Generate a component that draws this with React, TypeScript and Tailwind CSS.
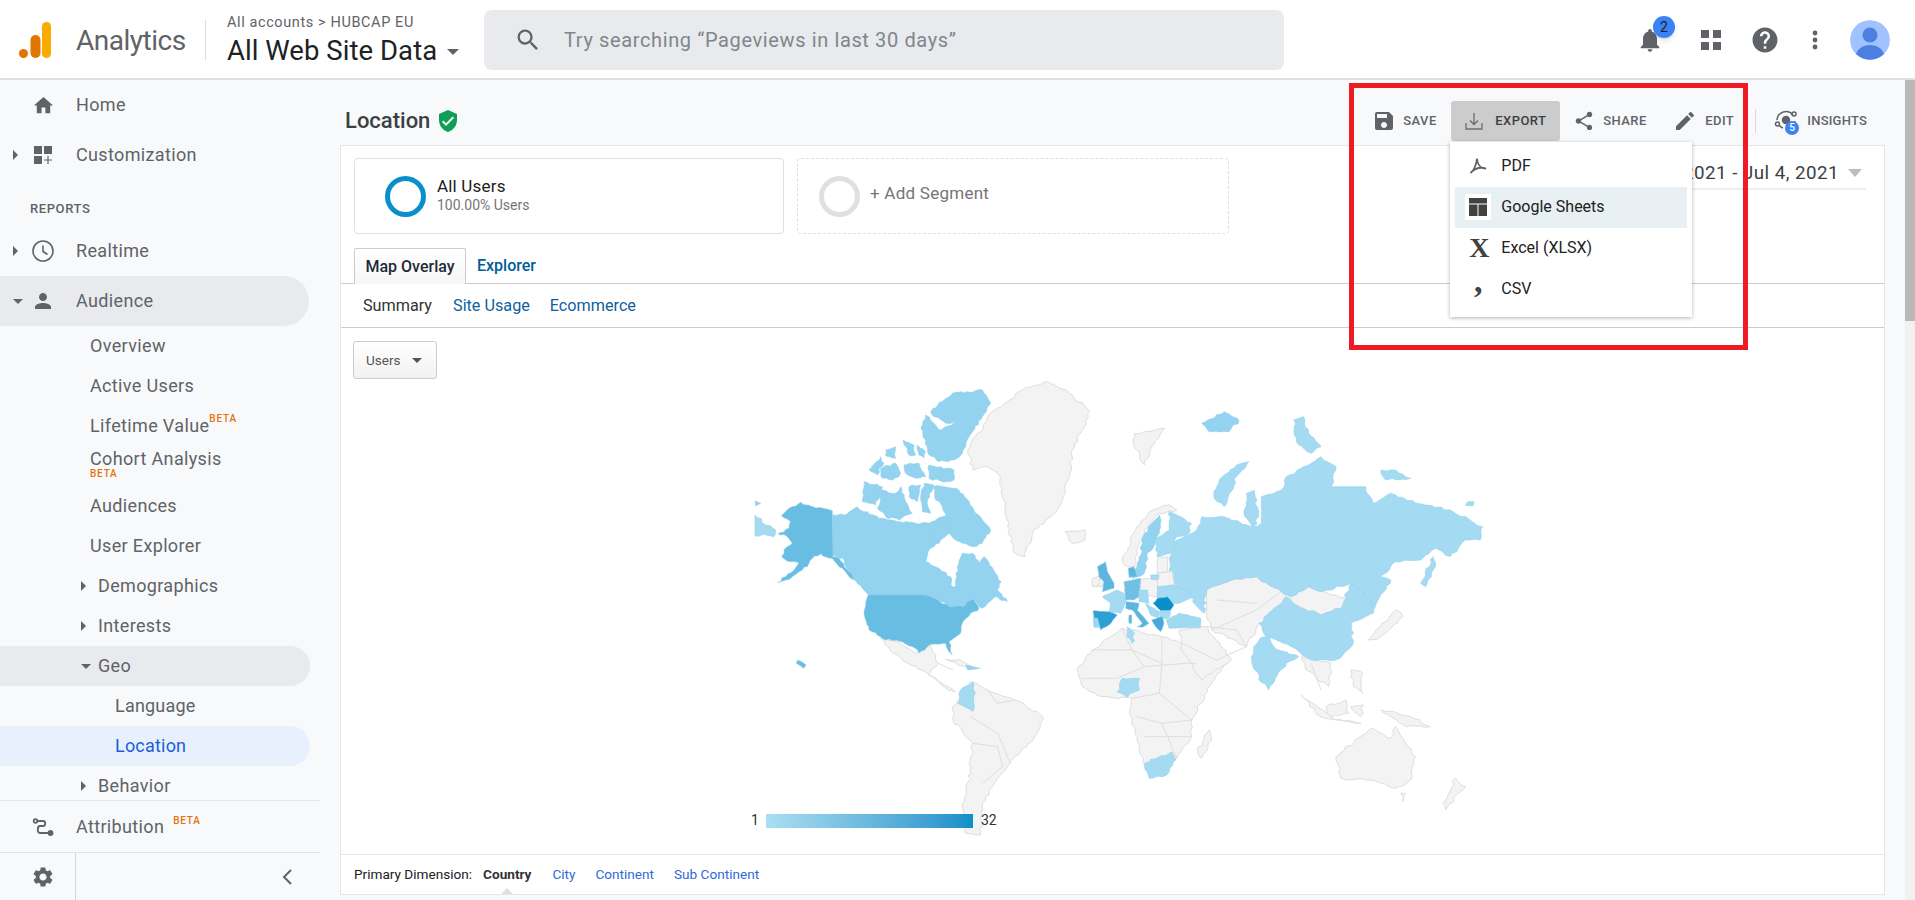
import type { ReactNode } from "react"

type Land = [string, string]

const GREY = "#f3f3f3"
const RU = "#a4dbf2"
const CA = "#93d3ef"
const US = "#68bde2"

// shapes traced off three different crops, so each list has its own transform
const worldGrey: string[] = [
  "460,240 505,130 570,60 620,35 665,70 705,125 690,180 670,240 665,320 640,420 590,490 575,560 555,550 540,470 525,320 500,290 470,300",
  "655,485 695,480 695,510 670,520",
  "795,190 855,175 830,230 815,285 795,230",
  "285,805 320,815 355,850 385,825 400,880 380,915 420,950 435,965 420,960 390,920 345,885 310,850",
  "415,868 445,870 470,890 440,885",
  "430,1010 465,935 500,960 555,990 610,1040 600,1090 545,1180 520,1225 490,1300 485,1395 455,1390 450,1320 465,1200 470,1120 430,1050",
  "680,900 710,840 770,775 850,800 890,820 920,880 985,870 950,940 910,1050 910,1100 880,1165 825,1225 800,1110 785,1030 790,985 730,980 690,950",
  "945,1080 950,1110 930,1165 922,1140",
  "770,570 800,470 825,425 865,405 880,420 845,430 815,480 800,540 795,590 780,590",
  "940,660 990,630 1040,620 1090,665 1100,680 1045,760 1020,830 950,780 940,740",
  "885,780 940,770 990,870 930,930 890,840",
  "1105,680 1145,650 1175,665 1225,690 1210,715 1170,735 1120,705",
  "1130,860 1190,880 1185,950 1160,920 1140,900",
  "1265,810 1320,720 1335,740 1290,800",
  "1230,900 1250,905 1255,970 1235,950",
  "1130,975 1200,1050 1250,1060 1170,1040",
  "1180,1010 1220,990 1225,1030 1190,1040",
  "1230,1010 1255,1005 1250,1040",
  "1290,1020 1350,1040 1390,1070 1340,1070",
  "1200,1160 1270,1075 1310,1105 1320,1070 1360,1160 1350,1230 1320,1255 1270,1230 1210,1225",
  "1330,1270 1340,1270 1335,1295",
  "1440,1225 1460,1250 1420,1320 1415,1300",
  "715,625 740,615 730,650 712,650",
]

const worldBorders: string[] = [
  "770,775 790,840 850,880 850,800",
  "710,840 790,840 815,890 760,925 690,925",
  "815,890 900,880 920,880",
  "850,880 845,970 790,985",
  "845,970 910,1050 850,1060 800,1040",
  "850,1060 880,1165",
  "815,1100 910,1100",
  "465,1040 520,1090 545,1180",
  "470,1120 520,1130 530,1190 490,1240",
  "500,960 520,1000 555,990",
  "1000,780 1020,830 960,870",
  "950,780 1040,720 1090,665",
  "1150,880 1170,960",
  "400,880 430,900",
  "960,690 1040,700",
  "940,770 1000,780",
  "890,820 960,870",
]

const worldBlue: Land[] = [
  ["780,770 795,790 790,820 780,800", RU],
  ["770,925 805,925 805,960 780,982 760,965", RU],
  ["440,1000 445,960 470,935 475,970 470,1025", RU],
  ["815,1180 870,1145 878,1170 860,1215 825,1225", RU],
  ["930,160 975,125 1005,150 985,185 945,185", CA],
  ["1115,150 1135,140 1145,190 1170,230 1150,250 1120,215", RU],
  ["1290,300 1320,300 1350,325 1300,330", RU],
  ["1000,285 1025,275 1000,320 975,410 955,385 965,330", RU],
  ["1020,370 1035,360 1045,440 1030,480 1015,430", RU],
  ["1370,640 1395,560 1400,590 1380,650", RU],
  ["1465,395 1478,395 1475,408 1460,406", RU],
  ["865,570 880,510 920,480 930,440 975,440 1030,470 1050,460 1050,380 1090,360 1100,320 1170,260 1200,290 1190,350 1260,350 1275,400 1310,370 1380,405 1430,420 1495,470 1490,510 1460,510 1430,560 1400,535 1370,570 1320,575 1290,620 1310,630 1285,690 1270,730 1230,640 1170,665 1145,650 1110,680 1090,665 1040,620 990,630 940,660 935,730 905,680 870,640", RU],
  ["1045,760 1100,680 1120,705 1170,735 1210,715 1230,640 1270,690 1275,730 1230,760 1235,820 1200,870 1150,870 1110,830 1060,800", RU],
  ["1035,830 1060,790 1075,830 1125,860 1100,880 1065,960 1045,930 1030,860", RU],
  ["800,590 815,490 845,435 845,490 820,560 815,610 790,625", CA],
  ["865,425 910,460 905,490 880,500 870,550 840,560 835,510 865,480", RU],
  ["455,885 485,895 460,900", CA],
  ["118,870 135,885 130,895 115,880", US],
]

const northAmerica: Land[] = [
  ["18,405 50,435 80,450 75,470 50,465 18,468", RU],
  ["18,362 35,370 20,378", CA],
  ["252,405 285,405 325,380 345,395 400,415 445,425 500,430 540,430 575,465 570,490 540,510 530,545 570,565 605,590 610,620 620,620 625,560 640,520 670,520 690,550 705,530 740,580 757,605 745,630 775,665 740,650 700,685 690,680 675,660 640,680 605,705 590,670 555,655 530,645 358,645 340,625 310,590 280,535 252,525", CA],
  ["540,430 600,400 620,395 655,430 640,445 615,440 600,460 575,480 570,490 545,460", CA],
  ["555,320 585,320 630,330 670,380 700,420 725,450 700,490 670,500 640,490 600,460 615,440 640,445 655,430 620,395 600,400 590,440 575,430 590,410 580,380 560,360", CA],
  ["345,305 400,320 380,375 340,365", CA],
  ["385,330 440,340 455,320 470,365 490,400 450,420 410,410 385,385 395,360", CA],
  ["480,320 515,315 505,365 480,350", CA],
  ["525,310 555,315 535,360 545,400 520,395 515,360", CA],
  ["545,95 610,40 700,30 725,70 700,110 660,170 640,220 615,240 570,245 540,225 530,180 515,145 530,105 555,130 570,150 625,125 590,130 555,110", CA],
  ["540,255 565,262 615,270 615,300 580,305 540,295", CA],
  ["360,270 395,230 405,250 390,265 385,285", CA],
  ["395,265 440,250 455,280 430,300 400,295", CA],
  ["465,255 510,250 530,290 500,295 470,280", CA],
  ["462,180 495,195 500,225 480,225", CA],
  ["505,195 530,215 525,235 510,225", CA],
  ["410,210 440,200 440,235 410,228", CA],
  ["155,367 185,378 250,392 252,530 270,535 300,575 315,600 300,590 280,565 250,535 215,522 190,535 180,550 160,570 130,590 110,600 85,608 110,590 135,570 150,548 125,545 98,530 105,510 130,490 115,470 88,462 120,445 125,425 97,408 120,385", US],
  ["358,645 530,645 555,655 600,680 640,680 672,658 690,685 665,700 640,730 635,760 600,785 610,825 600,815 590,790 540,795 510,820 490,800 460,785 400,775 360,750 347,710 350,670", US],
]

const europeGrey: string[] = [
  "40,115 62,108 60,135 40,140",
  "185,118 235,115 235,170 200,165 185,155",
  "235,100 280,95 285,135 235,140",
  "235,55 265,50 265,95 235,100",
]

const europeBlue: Land[] = [
  ["55,80 80,65 85,95 105,130 105,145 70,155 75,125 60,110", "#5db6df"],
  ["70,170 115,150 135,160 140,185 125,220 90,215 95,190", RU],
  ["42,212 90,215 115,225 90,255 65,270 55,235 45,235", "#2e9fd4"],
  ["42,235 55,235 62,262 45,262", "#9ad7f0"],
  ["135,125 185,115 180,170 165,180 140,180", "#6fc0e4"],
  ["148,85 165,80 175,110 150,112", "#5db6df"],
  ["180,150 205,150 210,190 180,185", RU],
  ["140,185 180,190 175,210 210,250 190,262 175,260 190,250 160,210 140,205", "#5cb5de"],
  ["150,225 158,225 158,250 150,250", "#5cb5de"],
  ["235,140 280,135 330,155 335,175 300,190 280,190 265,170 235,175", RU],
  ["200,190 240,215 240,235 215,225", RU],
  ["240,215 275,210 270,235 245,235", RU],
  ["218,240 250,230 255,250 245,275 230,260", "#47a9d9"],
  ["262,240 300,220 365,235 365,262 270,265", "#a0daf1"],
  ["215,105 240,105 238,118 217,118", RU],
  ["235,175 265,170 285,195 275,210 245,212 222,190", "#0a8ec8"],
]

// rough up the long traced edges so they read as coastline; the offset depends only
// on the position, so two countries sharing an edge still meet. Long straight borders stay straight.
const wobble = (x: number, y: number, seed: number) => {
  const v = Math.sin(x * 12.9898 + y * 78.233 + seed) * 43758.5453
  return v - Math.floor(v) - 0.5
}

const roughen = (points: string, amp: number) => {
  const pts = points.split(" ").map((p) => p.split(",").map(Number))
  const out: string[] = []
  pts.forEach((a, i) => {
    const b = pts[(i + 1) % pts.length]
    const dx = b[0] - a[0]
    const dy = b[1] - a[1]
    const len = Math.hypot(dx, dy)
    out.push(a.join(","))
    if (len > 60 && (Math.abs(dx) < 4 || Math.abs(dy) < 4)) return
    const n = Math.floor(len / 9)
    for (let k = 1; k < n; k++) {
      const x = Math.round(a[0] + (dx * k) / n)
      const y = Math.round(a[1] + (dy * k) / n)
      out.push(`${x + wobble(x, y, 1) * amp},${y + wobble(x, y, 2) * amp}`)
    }
  })
  return out.join(" ")
}

const Shape = ({ points, fill, amp = 7 }: { points: string; fill: string; amp?: number }) => (
  <polygon
    points={roughen(points, amp)}
    fill={fill}
    stroke={fill === GREY ? "#dedede" : "#8ccde9"}
    strokeWidth={fill === GREY ? 1 : 0.5}
    strokeLinejoin="round"
    vectorEffect="non-scaling-stroke"
  />
)

const WorldMap = () => (
  <svg viewBox="0 0 780 484" className="w-[780px] h-[484px] block">
    <g transform="scale(0.4975 0.3333)">
      {worldGrey.map((p, i) => <Shape key={i} points={p} fill={GREY} />)}
      {worldBorders.map((p, i) => (
        <polyline key={i} points={p} fill="none" stroke="#dedede" strokeWidth={1} vectorEffect="non-scaling-stroke" />
      ))}
      {worldBlue.map(([p, c], i) => <Shape key={i} points={p} fill={c} />)}
    </g>
    <g transform="translate(10 10) scale(0.3333)">
      {northAmerica.map(([p, c], i) => <Shape key={i} points={p} fill={c} />)}
    </g>
    <g transform="translate(340 170) scale(0.3333)">
      {europeGrey.map((p, i) => <Shape key={i} points={p} fill={GREY} amp={2} />)}
      {europeBlue.map(([p, c], i) => <Shape key={i} points={p} fill={c} amp={2} />)}
    </g>
  </svg>
)

const Icon = ({ d, className }: { d: string; className: string }) => (
  <svg viewBox="0 0 24 24" fill="currentColor" className={className}>
    <path d={d} />
  </svg>
)

const Caret = ({ open }: { open?: boolean }) =>
  open ? (
    <span className="w-0 h-0 border-x-[5px] border-x-transparent border-t-[5px] border-t-[#5f6368]" />
  ) : (
    <span className="w-0 h-0 border-y-[5px] border-y-transparent border-l-[5px] border-l-[#5f6368]" />
  )

const Beta = ({ className }: { className: string }) => (
  <span className={"text-[10px] leading-none font-medium tracking-[0.8px] text-[#e8710a] " + className}>BETA</span>
)

const NavRow = ({ label, icon, caret, open, className }: { label: string; icon: ReactNode; caret?: boolean; open?: boolean; className?: string }) => (
  <div className={"h-[50px] flex items-center shrink-0 " + (className ?? "")}>
    <div className="w-[33px] pl-[13px] flex items-center">{caret && <Caret open={open} />}</div>
    <div className="w-[43px] flex items-center">{icon}</div>
    <span className="text-[18px] -mt-[1px] tracking-[0.35px]">{label}</span>
  </div>
)

const SubRow = ({ label, children }: { label: string; children?: ReactNode }) => (
  <div className="h-10 pl-[90px] flex items-center shrink-0">
    <span className="text-[18px] -mt-[2px] tracking-[0.35px]">{label}</span>
    {children}
  </div>
)

const CaretRow = ({ label, open, className }: { label: string; open?: boolean; className?: string }) => (
  <div className={"h-10 pl-[81px] flex items-center shrink-0 " + (className ?? "")}>
    <div className="w-[17px] flex items-center"><Caret open={open} /></div>
    <span className="text-[18px] -mt-[2px] tracking-[0.35px]">{label}</span>
  </div>
)

const Sidebar = () => (
  <aside className="w-[320px] mr-[20px] h-[820px] flex flex-col text-[#5f6368] shrink-0">
    <div className="h-[720px] overflow-hidden flex flex-col">
      <NavRow label="Home" icon={<Icon className="w-[23px] h-[23px] -ml-[1px]" d="M10 20v-6h4v6h5v-8h3L12 3 2 12h3v8z" />} />
      <NavRow
        label="Customization"
        caret
        icon={
          <svg viewBox="0 0 20 20" fill="currentColor" className="w-5 h-5">
            <rect x="1" y="1" width="8" height="8" />
            <rect x="11" y="1" width="8" height="8" />
            <rect x="1" y="11" width="8" height="8" />
            <path d="M14.4 11h1.2v3.4H19v1.2h-3.4V19h-1.2v-3.4H11v-1.2h3.4z" />
          </svg>
        }
      />
      <div className="h-[46px] pl-[30px] pt-[11px] flex items-center shrink-0 text-[13px] font-medium tracking-[0.6px]">REPORTS</div>
      <NavRow
        label="Realtime"
        caret
        icon={
          <svg viewBox="0 0 24 24" fill="none" stroke="currentColor" strokeWidth="1.6" className="w-6 h-6 -ml-[2px]">
            <circle cx="12" cy="12" r="10" />
            <path d="M12 6.5V12.5l4.5 3" />
          </svg>
        }
      />
      <NavRow
        label="Audience"
        caret
        open
        className="w-[309px] rounded-r-full bg-[#e8eaed]"
        icon={<Icon className="w-[24px] h-[24px] -ml-[2px]" d="M12 12c2.21 0 4-1.79 4-4s-1.79-4-4-4-4 1.79-4 4 1.79 4 4 4zm0 2c-2.67 0-8 1.34-8 4v2h16v-2c0-2.66-5.33-4-8-4z" />}
      />
      <SubRow label="Overview" />
      <SubRow label="Active Users" />
      <SubRow label="Lifetime Value"><Beta className="-mt-[14px]" /></SubRow>
      <div className="h-10 pl-[90px] shrink-0 flex flex-col pt-[3px]">
        <span className="text-[18px] leading-5 tracking-[0.35px]">Cohort Analysis</span>
        <Beta className="" />
      </div>
      <SubRow label="Audiences" />
      <SubRow label="User Explorer" />
      <CaretRow label="Demographics" />
      <CaretRow label="Interests" />
      <CaretRow label="Geo" open className="w-[310px] rounded-r-full bg-[#e8eaed]" />
      <div className="h-10 pl-[115px] pb-[2px] flex items-center shrink-0 text-[18px] tracking-[0.2px]">Language</div>
      <div className="h-10 w-[310px] pl-[115px] pb-[2px] flex items-center shrink-0 text-[18px] tracking-[0.2px] rounded-r-full bg-[#e8f0fe] text-[#1a5fd8]">Location</div>
      <CaretRow label="Behavior" />
    </div>
    <div className="h-[52px] flex items-center border-t border-[#e4e5e7] shrink-0">
      <div className="w-[32px]" />
      <div className="w-[44px]">
        <svg viewBox="0 0 22 18" fill="none" stroke="currentColor" strokeWidth="1.8" className="w-[22px] h-[18px]">
          <circle cx="3.5" cy="3" r="1.8" />
          <circle cx="18.5" cy="15" r="2" fill="currentColor" />
          <path d="M5 3h6c3 0 3 5 0 5H8c-3 0-3 7 0 7h9" />
        </svg>
      </div>
      <span className="text-[18px] -mt-[1px] tracking-[0.35px]">Attribution</span>
      <Beta className="ml-[9px] -mt-[12px]" />
    </div>
    <div className="h-[48px] flex items-center border-t border-[#e0e1e3] shrink-0">
      <div className="w-[76px] h-full flex items-center justify-start pl-[31px] border-r border-[#d5d6d8]">
        <Icon className="w-6 h-6" d="M19.14 12.94c.04-.3.06-.61.06-.94 0-.32-.02-.64-.07-.94l2.03-1.58a.49.49 0 0 0 .12-.61l-1.92-3.32a.488.488 0 0 0-.59-.22l-2.39.96c-.5-.38-1.03-.7-1.62-.94l-.36-2.54a.484.484 0 0 0-.48-.41h-3.84c-.24 0-.43.17-.47.41l-.36 2.54c-.59.24-1.13.57-1.62.94l-2.39-.96c-.22-.08-.47 0-.59.22L2.74 8.87c-.12.21-.08.47.12.61l2.03 1.58c-.05.3-.09.63-.09.94s.02.64.07.94l-2.03 1.58a.49.49 0 0 0-.12.61l1.92 3.32c.12.22.37.29.59.22l2.39-.96c.5.38 1.03.7 1.62.94l.36 2.54c.05.24.24.41.48.41h3.84c.24 0 .44-.17.47-.41l.36-2.54c.59-.24 1.13-.56 1.62-.94l2.39.96c.22.08.47 0 .59-.22l1.92-3.32c.12-.22.07-.47-.12-.61l-2.01-1.58zM12 15.6c-1.98 0-3.6-1.62-3.6-3.6s1.62-3.6 3.6-3.6 3.6 1.62 3.6 3.6-1.62 3.6-3.6 3.6z" />
      </div>
      <svg viewBox="0 0 12 18" fill="none" stroke="currentColor" strokeWidth="2" className="w-3 h-[18px] ml-[205px]">
        <path d="M10 2L3 9l7 7" />
      </svg>
    </div>
  </aside>
)

const Header = () => (
  <header className="h-20 pt-[2px] flex items-center bg-white border-b-2 border-[#e0e0e0] shrink-0">
    <svg viewBox="0 0 32 36" className="w-8 h-9 ml-[19px]">
      <circle cx="4.5" cy="31.5" r="4.5" fill="#e37400" />
      <rect x="11.5" y="13" width="10" height="23" rx="5" fill="#e37400" />
      <rect x="23" y="0" width="9" height="36" rx="4.5" fill="#f9ab00" />
    </svg>
    <span className="ml-[25px] mt-[1px] w-[110px] text-[28px] tracking-[-0.5px] text-[#5f6368] whitespace-nowrap">Analytics</span>
    <div className="ml-[19px] h-10 border-l border-[#dadce0]" />
    <div className="ml-[21px] w-[257px] flex flex-col">
      <div className="text-[14.5px] leading-[18px] text-[#5f6368] tracking-[0.6px]">All accounts &gt; HUBCAP EU</div>
      <div className="flex items-center mt-[3px]">
        <span className="text-[27.5px] leading-8 text-[#202124] tracking-[0.05px]">All Web Site Data</span>
        <span className="ml-[10px] mt-[2px] w-0 h-0 border-x-[6px] border-x-transparent border-t-[6px] border-t-[#5f6368]" />
      </div>
    </div>
    <div className="w-[800px] h-[60px] rounded-lg bg-[#e8eaed] flex items-center pl-[30px]">
      <Icon className="w-7 h-7 text-[#5f6368]" d="M15.5 14h-.79l-.28-.27A6.471 6.471 0 0 0 16 9.5 6.5 6.5 0 1 0 9.5 16c1.61 0 3.09-.59 4.23-1.57l.27.28v.79l5 4.99L20.49 19l-4.99-5zm-6 0C7.01 14 5 11.99 5 9.5S7.01 5 9.5 5 14 7.01 14 9.5 11.99 14 9.5 14z" />
      <span className="ml-[22px] text-[20px] tracking-[0.62px] text-[#80868b]">Try searching “Pageviews in last 30 days”</span>
    </div>
    <div className="ml-auto flex items-center text-[#5f6368]">
      <div className="relative w-7 h-7">
        <Icon className="w-7 h-7" d="M12 22c1.1 0 2-.9 2-2h-4c0 1.1.89 2 2 2zm6-6v-5c0-3.07-1.64-5.64-4.5-6.32V4c0-.83-.67-1.5-1.5-1.5s-1.5.67-1.5 1.5v.68C7.63 5.36 6 7.92 6 11v5l-2 2v1h16v-1l-2-2z" />
        <span className="absolute -top-[10px] left-[17px] w-[22px] h-[22px] rounded-full bg-[#3b82f6] shadow-md text-[#202124] text-[14px] flex items-center justify-center">2</span>
      </div>
      <svg viewBox="0 0 20 20" fill="currentColor" className="w-5 h-5 ml-[37px]">
        <rect x="0" y="0" width="8" height="8" />
        <rect x="12" y="0" width="8" height="8" />
        <rect x="0" y="12" width="8" height="8" />
        <rect x="12" y="12" width="8" height="8" />
      </svg>
      <Icon className="w-[30px] h-[30px] ml-[29px]" d="M12 2C6.48 2 2 6.48 2 12s4.48 10 10 10 10-4.48 10-10S17.52 2 12 2zm1 17h-2v-2h2v2zm2.07-7.75l-.9.92C13.45 12.9 13 13.5 13 15h-2v-.5c0-1.1.45-2.1 1.17-2.83l1.24-1.26c.37-.36.59-.86.59-1.41 0-1.1-.9-2-2-2s-2 .9-2 2H8c0-2.21 1.79-4 4-4s4 1.79 4 4c0 .88-.36 1.68-.93 2.25z" />
      <svg viewBox="0 0 6 20" fill="currentColor" className="w-[6px] h-5 ml-[32px]">
        <circle cx="3" cy="3" r="2.4" />
        <circle cx="3" cy="10" r="2.4" />
        <circle cx="3" cy="17" r="2.4" />
      </svg>
      <svg viewBox="0 0 40 40" className="w-10 h-10 ml-[32px] mr-[25px] rounded-full">
        <circle cx="20" cy="20" r="20" fill="#a0c3ff" />
        <circle cx="20" cy="15" r="7.5" fill="#4c7fe0" />
        <path d="M6 34c2-6 8-9 14-9s12 3 14 9a20 20 0 0 1-28 0z" fill="#4c7fe0" />
      </svg>
    </div>
  </header>
)

const ExportMenu = () => (
  <div className="absolute top-[41px] -left-[1px] w-[242px] h-[175px] bg-white shadow-[0_1px_4px_rgba(0,0,0,0.3)] z-10 pt-[5px] px-[5px] text-[16px] tracking-normal font-normal text-[#212121]">
    <div className="h-[41px] -mt-[1px] flex items-center pl-[14px]">
      <svg viewBox="0 0 18 18" fill="none" stroke="#5f6368" strokeWidth="1.8" className="w-[18px] h-[18px]">
        <path d="M1.5 16c3-2 5.5-7 6.5-14.5M8 2c.5 5 3.5 9.5 9 9.5-5-1.5-11-.5-15.5 4.5" />
      </svg>
      <span className="ml-[14px]">PDF</span>
    </div>
    <div className="h-[41px] flex items-center bg-[#e8f0f3] pl-[10px]">
      <div className="w-[26px] h-[26px] bg-white flex items-center justify-center">
        <svg viewBox="0 0 18 18" fill="#424242" className="w-[18px] h-[18px]">
          <rect x="0" y="0" width="18" height="5.5" />
          <rect x="0" y="6.5" width="8.5" height="11.5" />
          <rect x="9.5" y="6.5" width="8.5" height="11.5" />
        </svg>
      </div>
      <span className="ml-[10px]">Google Sheets</span>
    </div>
    <div className="h-[41px] flex items-center pl-[14px]">
      <span className="w-[18px] text-center font-['Liberation_Serif',serif] font-bold text-[28px] leading-none text-[#424242]">X</span>
      <span className="ml-[14px]">Excel (XLSX)</span>
    </div>
    <div className="h-[41px] flex items-center pl-[14px]">
      <span className="w-[18px] text-center font-['Liberation_Serif',serif] font-bold text-[34px] leading-none -mt-[16px] text-[#424242]">,</span>
      <span className="ml-[14px]">CSV</span>
    </div>
  </div>
)

const Toolbar = () => (
  <div className="h-[65px] pt-[16px] flex items-center shrink-0">
    <div className="ml-[5px] text-[22px] font-medium text-[#3c4043]">Location</div>
    <Icon className="w-[24px] h-[24px] ml-[6px] text-[#0f9d58]" d="M12 1L3 5v6c0 5.55 3.84 10.74 9 12 5.16-1.26 9-6.45 9-12V5l-9-4zm-2 16l-4-4 1.41-1.41L10 14.17l6.59-6.59L18 9l-8 8z" />
    <div className="ml-auto mr-[38px] h-10 flex items-center text-[13px] font-medium text-[#5f6368] tracking-[0.4px]">
      <div className="w-[89px] h-10 flex items-center pl-[10px]">
        <Icon className="w-6 h-6" d="M17 3H5c-1.11 0-2 .9-2 2v14c0 1.1.89 2 2 2h14c1.1 0 2-.9 2-2V7l-4-4zm-5 16c-1.66 0-3-1.34-3-3s1.34-3 3-3 3 1.34 3 3-1.34 3-3 3zm3-10H5V5h10v4z" />
        <span className="ml-[7px]">SAVE</span>
      </div>
      <div className="relative w-[109px] h-10 flex items-center pl-[13px] bg-[#cccccc] rounded-[3px] text-[#3c4043]">
        <svg viewBox="0 0 20 20" fill="none" stroke="#6b6e72" strokeWidth="1.3" className="w-5 h-5">
          <path d="M10 2v11M6 9.5l4 4 4-4M2 12v6h16v-6" />
        </svg>
        <span className="ml-[11px]">EXPORT</span>
        <ExportMenu />
      </div>
      <div className="w-[104px] h-10 flex items-center pl-[13px]">
        <Icon className="w-[22px] h-[22px]" d="M18 16.08c-.76 0-1.44.3-1.96.77L8.91 12.7c.05-.23.09-.46.09-.7s-.04-.47-.09-.7l7.05-4.11c.54.5 1.25.81 2.04.81 1.66 0 3-1.34 3-3s-1.34-3-3-3-3 1.34-3 3c0 .24.04.47.09.7L8.04 9.81C7.5 9.31 6.79 9 6 9c-1.66 0-3 1.34-3 3s1.34 3 3 3c.79 0 1.5-.31 2.04-.81l7.12 4.16c-.05.21-.08.43-.08.65 0 1.61 1.31 2.92 2.92 2.92 1.61 0 2.92-1.31 2.92-2.92s-1.31-2.92-2.92-2.92z" />
        <span className="ml-[8px]">SHARE</span>
      </div>
      <div className="w-[80px] h-10 flex items-center pl-[9px]">
        <Icon className="w-6 h-6" d="M3 17.25V21h3.75L17.81 9.94l-3.75-3.75L3 17.25zM20.71 7.04c.39-.39.39-1.02 0-1.41l-2.34-2.34c-.39-.39-1.02-.39-1.41 0l-1.83 1.83 3.75 3.75 1.83-1.83z" />
        <span className="ml-[8px]">EDIT</span>
      </div>
      <div className="h-6 ml-[11px] border-l border-[#d9d9d9]" />
      <svg viewBox="0 0 26 26" className="w-[26px] h-[26px] ml-[18px]" fill="none" stroke="#5f6368" strokeWidth="1.5">
        <path d="M3 12a9 9 0 0 1 16-5M21 13a9 9 0 0 1-2 5M5 17a9 9 0 0 0 4 3" />
        <circle cx="12" cy="12" r="3.5" fill="#5f6368" />
        <circle cx="20" cy="6" r="2" />
        <circle cx="3.5" cy="16" r="2" />
      </svg>
      <span className="-ml-[15px] mt-[14px] w-[14px] h-[14px] rounded-full bg-[#3b82f6] text-white text-[10px] flex items-center justify-center relative">5</span>
      <span className="ml-[8px] tracking-[0.2px]">INSIGHTS</span>
    </div>
  </div>
)

const Segment = ({ dashed, children }: { dashed?: boolean; children: ReactNode }) => (
  <div className={"h-[76px] rounded-[4px] flex items-center " + (dashed ? "w-[432px] border border-dashed border-[#e0e0e0] pl-[21px]" : "w-[430px] border border-[#e0e0e0] pl-[30px]")}>
    {children}
  </div>
)

const Panel = () => (
  <div className="mr-[20px] bg-white border-x border-t border-b border-[#e6e6e6] h-[750px] flex flex-col relative">
    <div className="h-[102px] pt-[12px] pl-[13px] flex shrink-0">
      <Segment>
        <div className="w-[41px] h-[41px] rounded-full border-[5px] border-[#0a8fcb]" />
        <div className="ml-[11px] -mt-[4px] flex flex-col">
          <span className="text-[17px] leading-5 text-[#212121] tracking-[0.2px]">All Users</span>
          <span className="text-[14px] leading-4 mt-[1px] text-[#757575]">100.00% Users</span>
        </div>
      </Segment>
      <div className="w-[13px]" />
      <Segment dashed>
        <div className="w-[41px] h-[41px] rounded-full border-[5px] border-[#e0e0e0]" />
        <span className="ml-[10px] -mt-[4px] text-[17px] text-[#757575] tracking-[0.25px]">+ Add Segment</span>
      </Segment>
      <div className="ml-auto mr-[18px] h-[32px] w-[300px] flex items-center justify-end border-b-2 border-[#eeeeee] text-[18.8px] text-[#3c4043] tracking-[0.45px]">
        <span className="whitespace-nowrap mt-[1px]">Jun 4, 2021 - Jul 4, 2021</span>
        <span className="ml-[9px] mr-[4px] w-0 h-0 border-x-[7px] border-x-transparent border-t-[8px] border-t-[#bdbdbd]" />
      </div>
    </div>
    <div className="h-[36px] flex border-b border-[#cccccc] pl-[13px] shrink-0">
      <div className="w-[112px] h-[36px] border-x border-t border-[#cccccc] rounded-t-[2px] bg-gradient-to-b from-white to-[#f6f6f6] flex items-center justify-center text-[16px] font-medium text-[#1f2a37]">Map Overlay</div>
      <div className="ml-[11px] flex items-center text-[16px] font-medium text-[#005c9c]">Explorer</div>
    </div>
    <div className="h-[44px] pt-[1px] flex items-center border-b border-[#cccccc] pl-[22px] text-[16.2px] text-[#0f5f9e] shrink-0">
      <span className="text-[#333333]">Summary</span>
      <span className="ml-[21px]">Site Usage</span>
      <span className="ml-[20px]">Ecommerce</span>
    </div>
    <div className="h-[526px] relative shrink-0">
      <div className="ml-[12px] mt-[13px] w-[84px] h-[38px] border border-[#cccccc] rounded-[3px] bg-gradient-to-b from-white to-[#f2f2f2] flex items-center pl-[12px] text-[13.5px] text-[#555555]">
        Users
        <span className="ml-[12px] w-0 h-0 border-x-[5px] border-x-transparent border-t-[5px] border-t-[#555555]" />
      </div>
      <div className="ml-[398px] -mt-[9px]">
        <WorldMap />
      </div>
      <div className="absolute left-[410px] top-[482px] flex items-center text-[14px] text-[#333333]">
        <span className="w-[15px]">1</span>
        <div className="w-[207px] h-[14px] bg-gradient-to-r from-[#aadff3] to-[#0a8fc9]" />
        <span className="ml-[8px]">32</span>
      </div>
    </div>
    <div className="h-[40px] flex items-center border-t border-[#e6e6e6] pl-[13px] text-[13.6px] relative shrink-0">
      <span className="text-[#212121]">Primary Dimension:</span>
      <span className="ml-[11px] font-bold text-[#333333]">Country</span>
      <span className="ml-[21px] text-[#3367d6]">City</span>
      <span className="ml-[20px] text-[#3367d6]">Continent</span>
      <span className="ml-[20px] text-[#3367d6]">Sub Continent</span>
      <span className="absolute left-[160px] bottom-0 w-0 h-0 border-x-[6px] border-x-transparent border-b-[6px] border-b-[#e0e0e0]" />
    </div>
  </div>
)

const App = () => {
  return (
    <div className="relative w-full h-[900px] overflow-hidden flex flex-col bg-[#f8f9fa] font-['Roboto',sans-serif]">
      <Header />
      <div className="flex flex-1 min-h-0">
        <Sidebar />
        <main className="flex-1 min-w-0 flex flex-col">
          <Toolbar />
          <Panel />
        </main>
        <div className="w-[10px] shrink-0 bg-[#f1f1f1]">
          <div className="h-[241px] bg-[#b9b9b9]" />
        </div>
      </div>
      <div className="absolute left-[1349px] top-[83px] w-[399px] h-[267px] border-[5px] border-[#ed1c24] z-20 pointer-events-none" />
    </div>
  )
}

export default App
